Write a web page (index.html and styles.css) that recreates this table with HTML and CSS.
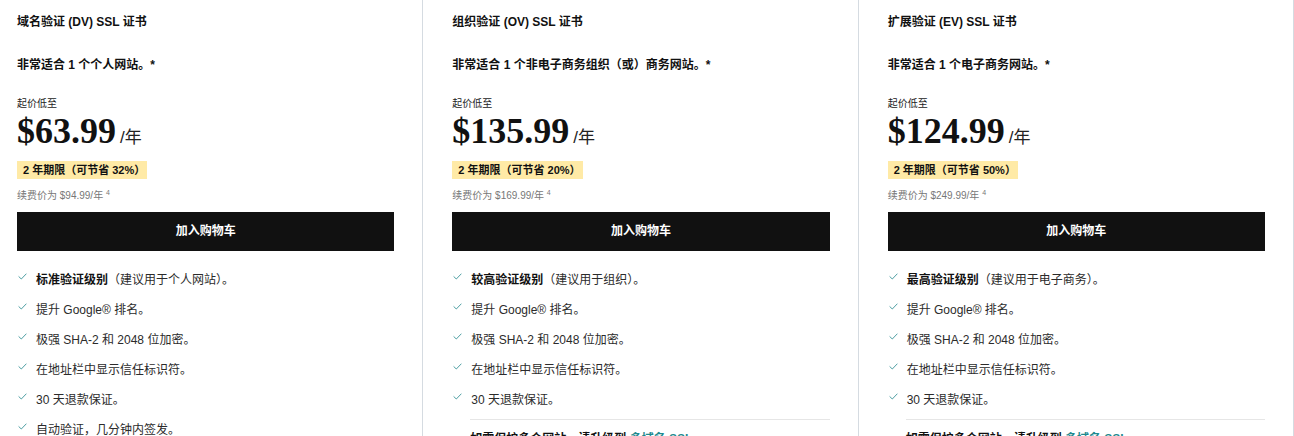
FILE: index.html
```html
<!DOCTYPE html>
<html lang="zh-CN">

<head>
  <meta charset="UTF-8">
  <meta name="viewport" content="width=device-width, initial-scale=1.0">
  <title>SSL 证书</title>
  <link rel="stylesheet" href="styles.css">
</head>

<body>
  <div class="plans">
    <section class="plan">
      <h3 class="plan-title">域名验证 (DV) SSL 证书</h3>
      <p class="plan-fit">非常适合 1 个个人网站。*</p>
      <p class="price-label">起价低至</p>
      <p class="price">$63.99<span class="per">/年</span></p>
      <p class="term">2 年期限（可节省 32%）</p>
      <p class="renew">续费价为 $94.99/年 <sup>4</sup></p>
      <a href="#" class="cart-btn">加入购物车</a>
      <ul class="features">
        <li><svg class="check" viewBox="0 0 9 7"><path d="M0.6 3.4 L3.3 6 L8.4 0.7" /></svg><span><b>标准验证级别</b>（建议用于个人网站）。</span></li>
        <li><svg class="check" viewBox="0 0 9 7"><path d="M0.6 3.4 L3.3 6 L8.4 0.7" /></svg><span>提升 Google® 排名。</span></li>
        <li><svg class="check" viewBox="0 0 9 7"><path d="M0.6 3.4 L3.3 6 L8.4 0.7" /></svg><span>极强 SHA-2 和 2048 位加密。</span></li>
        <li><svg class="check" viewBox="0 0 9 7"><path d="M0.6 3.4 L3.3 6 L8.4 0.7" /></svg><span>在地址栏中显示信任标识符。</span></li>
        <li><svg class="check" viewBox="0 0 9 7"><path d="M0.6 3.4 L3.3 6 L8.4 0.7" /></svg><span>30 天退款保证。</span></li>
        <li><svg class="check" viewBox="0 0 9 7"><path d="M0.6 3.4 L3.3 6 L8.4 0.7" /></svg><span>自动验证，几分钟内签发。</span></li>
      </ul>
    </section>

    <section class="plan">
      <h3 class="plan-title">组织验证 (OV) SSL 证书</h3>
      <p class="plan-fit">非常适合 1 个非电子商务组织（或）商务网站。*</p>
      <p class="price-label">起价低至</p>
      <p class="price">$135.99<span class="per">/年</span></p>
      <p class="term">2 年期限（可节省 20%）</p>
      <p class="renew">续费价为 $169.99/年 <sup>4</sup></p>
      <a href="#" class="cart-btn">加入购物车</a>
      <ul class="features">
        <li><svg class="check" viewBox="0 0 9 7"><path d="M0.6 3.4 L3.3 6 L8.4 0.7" /></svg><span><b>较高验证级别</b>（建议用于组织）。</span></li>
        <li><svg class="check" viewBox="0 0 9 7"><path d="M0.6 3.4 L3.3 6 L8.4 0.7" /></svg><span>提升 Google® 排名。</span></li>
        <li><svg class="check" viewBox="0 0 9 7"><path d="M0.6 3.4 L3.3 6 L8.4 0.7" /></svg><span>极强 SHA-2 和 2048 位加密。</span></li>
        <li><svg class="check" viewBox="0 0 9 7"><path d="M0.6 3.4 L3.3 6 L8.4 0.7" /></svg><span>在地址栏中显示信任标识符。</span></li>
        <li><svg class="check" viewBox="0 0 9 7"><path d="M0.6 3.4 L3.3 6 L8.4 0.7" /></svg><span>30 天退款保证。</span></li>
      </ul>
      <hr class="divider">
      <p class="more">如需保护多个网站，请升级到 <a href="#">多域名 SSL</a></p>
    </section>

    <section class="plan">
      <h3 class="plan-title">扩展验证 (EV) SSL 证书</h3>
      <p class="plan-fit">非常适合 1 个电子商务网站。*</p>
      <p class="price-label">起价低至</p>
      <p class="price">$124.99<span class="per">/年</span></p>
      <p class="term">2 年期限（可节省 50%）</p>
      <p class="renew">续费价为 $249.99/年 <sup>4</sup></p>
      <a href="#" class="cart-btn">加入购物车</a>
      <ul class="features">
        <li><svg class="check" viewBox="0 0 9 7"><path d="M0.6 3.4 L3.3 6 L8.4 0.7" /></svg><span><b>最高验证级别</b>（建议用于电子商务）。</span></li>
        <li><svg class="check" viewBox="0 0 9 7"><path d="M0.6 3.4 L3.3 6 L8.4 0.7" /></svg><span>提升 Google® 排名。</span></li>
        <li><svg class="check" viewBox="0 0 9 7"><path d="M0.6 3.4 L3.3 6 L8.4 0.7" /></svg><span>极强 SHA-2 和 2048 位加密。</span></li>
        <li><svg class="check" viewBox="0 0 9 7"><path d="M0.6 3.4 L3.3 6 L8.4 0.7" /></svg><span>在地址栏中显示信任标识符。</span></li>
        <li><svg class="check" viewBox="0 0 9 7"><path d="M0.6 3.4 L3.3 6 L8.4 0.7" /></svg><span>30 天退款保证。</span></li>
      </ul>
      <hr class="divider">
      <p class="more">如需保护多个网站，请升级到 <a href="#">多域名 SSL</a></p>
    </section>
  </div>
</body>

</html>
```

FILE: styles.css
```css
    html,
    body {
      margin: 0;
      background: #fff;
      overflow: hidden;
      font-family: 'Liberation Sans', 'Noto Sans CJK SC', Arial, sans-serif;
      color: #111;
    }

    .plans {
      display: grid;
      grid-template-columns: repeat(3, 1fr);
      width: 1306px;
      margin-left: -12px;
    }

    .plan {
      border-right: 1px solid #d5dbe1;
      padding: 12px 28px 0 29px;
      height: 460px;
    }

    .plan p,
    .plan h3 {
      margin: 0;
    }

    .plan-title {
      font-size: 12px;
      line-height: 20px;
      font-weight: 700;
    }

    .plan-fit {
      margin-top: 23px !important;
      font-size: 12px;
      line-height: 20px;
      font-weight: 700;
    }

    .price-label {
      margin-top: 21px !important;
      font-size: 10px;
      line-height: 15px;
      color: #222;
    }

    .price {
      font-family: 'Liberation Serif', 'Times New Roman', serif;
      font-size: 36px;
      font-weight: 700;
      line-height: 40px;
      white-space: nowrap;
      color: #111;
    }

    .price .per {
      font-family: 'Liberation Sans', 'Noto Sans CJK SC', Arial, sans-serif;
      font-size: 17px;
      font-weight: 400;
      line-height: 20px;
      margin-left: 4px;
      color: #222;
    }

    .term {
      margin-top: 10px !important;
      width: fit-content;
      background: #ffeaa6;
      font-size: 11px;
      line-height: 18px;
      font-weight: 700;
      padding: 0 2px 0 6px;
    }

    .renew {
      margin-top: 10px !important;
      font-size: 10px;
      line-height: 14px;
      color: #777;
    }

    .renew sup {
      font-size: 7px;
      line-height: 0;
      vertical-align: 4px;
    }

    .cart-btn {
      display: block;
      margin-top: 9px;
      height: 39px;
      line-height: 39px;
      background: #111;
      color: #fff;
      text-align: center;
      text-decoration: none;
      font-size: 12px;
      font-weight: 700;
    }

    .features {
      list-style: none;
      margin: 12px 0 0;
      padding: 0;
    }

    .features li {
      display: flex;
      align-items: center;
      height: 30px;
      font-size: 12px;
      color: #2b2b2b;
    }

    .features li b {
      color: #111;
    }

    .check {
      width: 9px;
      height: 7px;
      margin: 0 9px 4px 1px;
      flex: none;
    }

    .check path {
      fill: none;
      stroke: #3a9499;
      stroke-width: 0.9;
    }

    .divider {
      border: 0;
      border-top: 1px solid #e6e6e6;
      margin: 6px 0 0 18px;
    }

    .more {
      margin: 9px 0 0 18px !important;
      font-size: 12px;
      line-height: 20px;
      font-weight: 700;
    }

    .more a {
      color: #1f8a8f;
      text-decoration: none;
    }
```
